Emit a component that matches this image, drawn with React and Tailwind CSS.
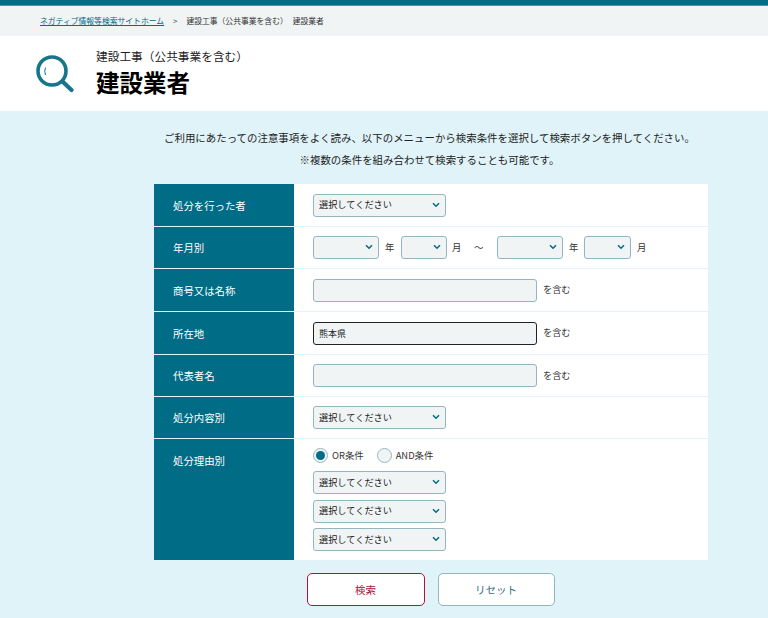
import React from 'react';

const font = { fontFamily: '"Noto Sans CJK JP", "Open Sans", sans-serif' };

function Chevron() {
  return (
    <svg className="pointer-events-none absolute right-[6px] top-[8px]" width="8" height="6" viewBox="0 0 8 6" fill="none">
      <path d="M1 1.2 L4 4.2 L7 1.2" stroke="#006c85" strokeWidth="1.5" />
    </svg>
  );
}

function Select({ width, label }) {
  return (
    <div className={`relative h-[23px] shrink-0 ${width}`}>
      <select className="block h-full w-full appearance-none rounded-[3px] border-[1.5px] border-[#93b7c1] bg-[#f0f4f5] pl-[5px] text-[9.2px] text-[#222] outline-none">
        <option>{label}</option>
      </select>
      <Chevron />
    </div>
  );
}

function Row({ title, height, alignTop, children }) {
  return (
    <div className={`flex border-b border-[#e0f3f8] last:border-b-0 ${height}`}>
      <div className={`flex w-[140px] shrink-0 bg-[#006c85] pl-[19px] text-[10.4px] text-white ${alignTop ? 'items-start pt-[14px]' : 'items-center pt-[1px]'}`}>
        {title}
      </div>
      <div className="min-w-0 flex-1 pl-[19px]">{children}</div>
    </div>
  );
}

function InputRow({ value, focused }) {
  return (
    <div className="flex h-full items-center gap-[6px]">
      <input
        readOnly
        value={value}
        className={`h-[23px] w-[224px] rounded-[3px] border-[1.5px] bg-[#f0f4f5] pl-[5px] text-[9px] text-[#222] outline-none ${focused ? 'border-[#222]' : 'border-[#93b7c1]'}`}
      />
      <span className="text-[9.2px] text-[#333]">を含む</span>
    </div>
  );
}

function Radio({ checked, label }) {
  return (
    <label className="flex items-center gap-[4px] text-[9.4px] text-[#333]">
      <span className="flex h-[15px] w-[15px] items-center justify-center rounded-full border border-[#93b7c1] bg-[#f0f4f5]">
        {checked && <span className="h-[9px] w-[9px] rounded-full bg-[#006c85]" />}
      </span>
      {label}
    </label>
  );
}

export default function App() {
  const placeholder = '選択してください';

  return (
    <div className="h-[618px] overflow-hidden bg-[#e0f3f8]" style={font}>
      <div className="h-[6px] border-b border-[#3d9db3] bg-[#006c85]" />

      <div className="flex h-[30px] items-center bg-[#f0f4f5] pb-[1px] pl-[40px] text-[7.8px] text-[#333]">
        <a href="#" className="text-[#006c85] underline">ネガティブ情報等検索サイトホーム</a>
        <span className="ml-[9px] mr-[9px]">&gt;</span>
        <span>建設工事（公共事業を含む）</span>
        <span className="ml-[5px]">建設業者</span>
      </div>

      <header className="flex h-[75px] items-center bg-white pl-[36px]">
        <svg width="38" height="38" viewBox="0 0 38 38" fill="none" className="shrink-0">
          <circle cx="16" cy="16" r="14" stroke="#17758a" strokeWidth="3.6" />
          <path d="M27 27 L35.5 35" stroke="#17758a" strokeWidth="4.2" strokeLinecap="round" />
          <path d="M9.5 12.5 Q8 16 9.5 20" stroke="#17758a" strokeWidth="1" />
        </svg>
        <div className="ml-[22px] -mt-[2px]">
          <p className="text-[11.7px] leading-[16px] text-[#222]">建設工事（公共事業を含む）</p>
          <h1 className="mt-[3px] text-[23.5px] font-bold leading-[30px] text-black">建設業者</h1>
        </div>
      </header>

      <main className="flex flex-col items-center">
        <div className="ml-[91px] mt-[16px] text-center text-[10.45px] leading-[22px] text-[#222]">
          <p>ご利用にあたっての注意事項をよく読み、以下のメニューから検索条件を選択して検索ボタンを押してください。</p>
          <p>※複数の条件を組み合わせて検索することも可能です。</p>
        </div>

        <div className="ml-[94px] mt-[13px] w-[554px] bg-white">
          <Row title="処分を行った者" height="h-[43px]">
            <div className="flex h-full items-center">
              <Select width="w-[133px]" label={placeholder} />
            </div>
          </Row>
          <Row title="年月別" height="h-[42px]">
            <div className="flex h-full items-center text-[9.4px] text-[#333]">
              <Select width="w-[66px]" label="" />
              <span className="ml-[6px] w-[16px]">年</span>
              <Select width="w-[46px]" label="" />
              <span className="ml-[5px] w-[22px]">月</span>
              <span className="w-[23px]">～</span>
              <Select width="w-[66px]" label="" />
              <span className="ml-[6px] w-[15px]">年</span>
              <Select width="w-[47px]" label="" />
              <span className="ml-[6px]">月</span>
            </div>
          </Row>
          <Row title="商号又は名称" height="h-[43px]"><InputRow value="" /></Row>
          <Row title="所在地" height="h-[43px]"><InputRow value="熊本県" focused /></Row>
          <Row title="代表者名" height="h-[42px]"><InputRow value="" /></Row>
          <Row title="処分内容別" height="h-[42px]">
            <div className="flex h-full items-center">
              <Select width="w-[133px]" label={placeholder} />
            </div>
          </Row>
          <Row title="処分理由別" height="h-[121px]" alignTop>
            <div className="flex flex-col pt-[8px]">
              <div className="flex h-[16px] items-center gap-[13px]">
                <Radio checked label="OR条件" />
                <Radio label="AND条件" />
              </div>
              <div className="mt-[8px] flex flex-col gap-[5.5px]">
                <Select width="w-[133px]" label={placeholder} />
                <Select width="w-[133px]" label={placeholder} />
                <Select width="w-[133px]" label={placeholder} />
              </div>
            </div>
          </Row>
        </div>

        <div className="ml-[93px] mt-[13px] flex gap-[13px]">
          <button className="h-[33px] w-[118px] rounded-[5px] border-[1.5px] border-[#b4103a] bg-white text-[10.5px] text-[#b4103a]">検索</button>
          <button className="h-[33px] w-[117px] rounded-[5px] border-[1.5px] border-[#93b7c1] bg-white text-[10.5px] text-[#2f6e80]">リセット</button>
        </div>
      </main>
    </div>
  );
}
